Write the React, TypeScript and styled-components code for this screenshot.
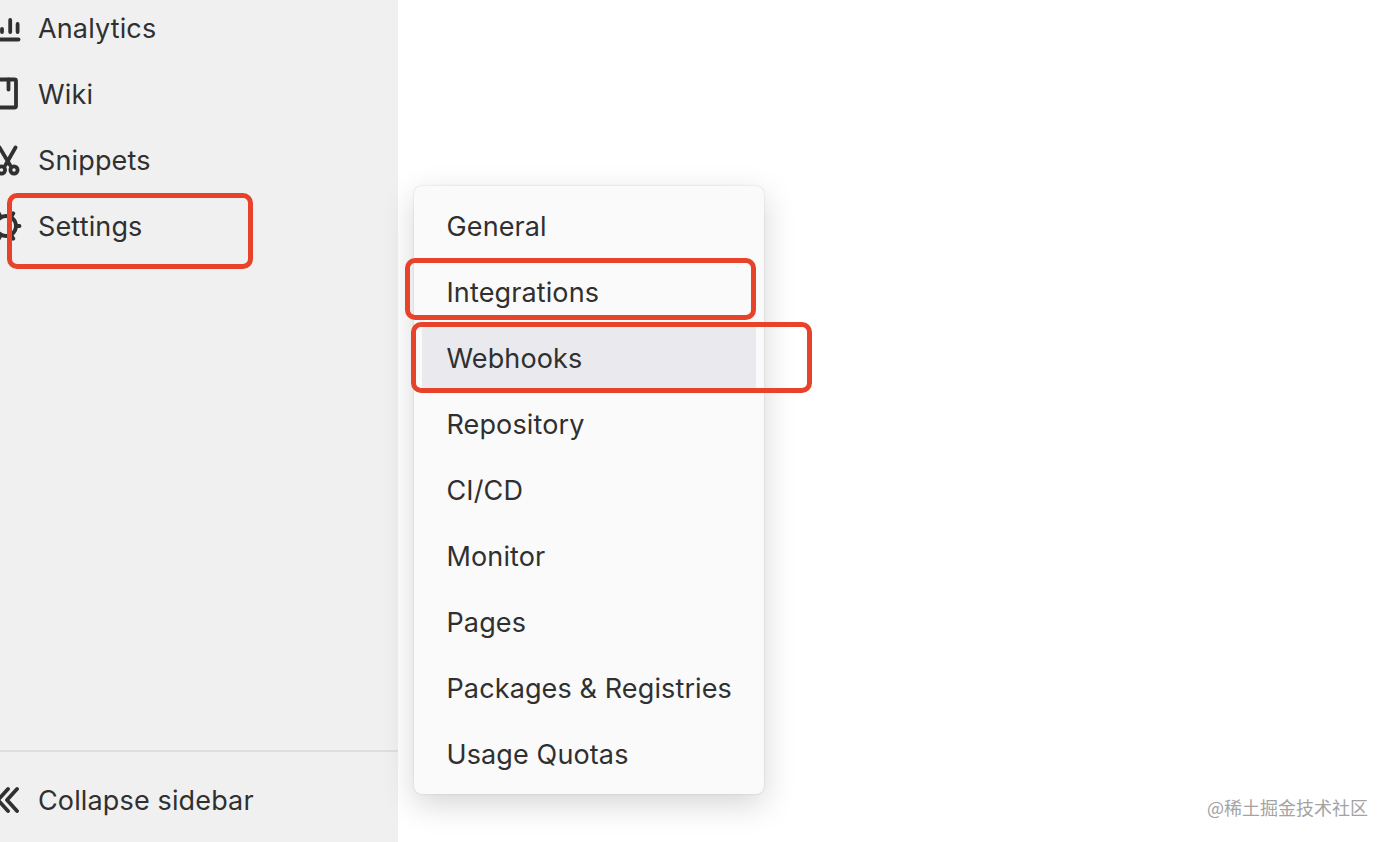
import React, {FC} from "react";
import styled, {createGlobalStyle} from "styled-components";

const sideItems = [
  {label: "Analytics", icon: <>
    <path d="M20 21v3M28.2 12v12M35.6 16v8"/>
    <path d="M17 31.5h19.5"/>
  </>},
  {label: "Wiki", icon: <>
    <path d="M14 5.5h18.5a1.5 1.5 0 0 1 1.5 1.5v25a1.5 1.5 0 0 1-1.5 1.5H14a4 4 0 0 1-4-4V9.500a4 4 0 0 1 4-4z"/>
    <path d="M26.500 5.500v10"/>
  </>},
  {label: "Snippets", icon: <>
    <path d="M33.500 7.500 23.500 25M17.500 7.500l10.500 17.500"/>
    <circle cx="32" cy="30" r="3.600"/>
    <circle cx="19.500" cy="30" r="3.600"/>
  </>},
  {label: "Settings", icon: <>
    <circle cx="24" cy="20" r="10"/>
    <path d="M34 20h3.500M29 11.300l2.300-4M19 11.300l-2.300-4M14 20h-3.500M19 28.700l-2.300 4M29 28.700l2.300 4"/>
  </>},
];

const menuItems = ["General", "Integrations", "Webhooks", "Repository", "CI/CD", "Monitor", "Pages", "Packages & Registries", "Usage Quotas"];

const App: FC = () => <Page>
  <GlobalStyle/>
  <Sidebar>
    <SideList>
      {sideItems.map(item => <SideRow key={item.label}>
        <SideIcon viewBox="0 0 40 40">{item.icon}</SideIcon>
        {item.label}
      </SideRow>)}
    </SideList>
    <SideFooter>
      <SideIcon viewBox="0 0 40 40">
        <path d="M35 9 25 20l10 11M26 9 16 20l10 11"/>
      </SideIcon>
      Collapse sidebar
    </SideFooter>
  </Sidebar>
  <Main>
    <Menu>
      {menuItems.map(label => <MenuItem key={label} $active={label === "Webhooks"}>{label}</MenuItem>)}
    </Menu>
  </Main>
  <Mark $x={7} $y={193} $w={246} $h={76}/>
  <Mark $x={405} $y={258} $w={351} $h={62}/>
  <Mark $x={411} $y={322} $w={401} $h={71}/>
  <Watermark>@稀土掘金技术社区</Watermark>
</Page>;
export default App;

const GlobalStyle = createGlobalStyle`
html, body {
  margin: 0;
  padding: 0;
  background: #fff;
}
`;

const Page = styled.div`
position: relative;
display: flex;
width: 1392px;
height: 842px;
overflow: hidden;
background: #fff;
color: #303030;
font-family: Inter, "Liberation Sans", sans-serif;
font-size: 27px;
`;

const Sidebar = styled.aside`
display: flex;
flex-direction: column;
justify-content: space-between;
width: 398px;
height: 100%;
background: #f0f0f0;
letter-spacing: 0.14px;
`;

const SideList = styled.div`
display: flex;
flex-direction: column;
margin-top: -5px;
`;

const SideRow = styled.div`
display: flex;
align-items: center;
gap: 16px;
height: 66px;
`;

const SideFooter = styled(SideRow)`
height: 92px;
padding-top: 6px;
box-sizing: border-box;
border-top: 2px solid #dedede;
`;

const SideIcon = styled.svg`
flex: none;
width: 40px;
height: 40px;
margin-left: -18px;
fill: none;
stroke: #303030;
stroke-width: 3.8;
stroke-linecap: round;
stroke-linejoin: round;
`;

const Main = styled.main`
flex: 1;
padding: 186px 0 0 16px;
`;

const Menu = styled.div`
display: flex;
flex-direction: column;
box-sizing: border-box;
width: 350px;
height: 608px;
padding: 7px 8px;
background: #fafafa;
border-radius: 8px;
box-shadow: 0 0 2px rgba(0, 0, 0, 0.16), 0 10px 32px rgba(0, 0, 0, 0.17);
letter-spacing: 0.12px;
`;

const MenuItem = styled.div<{$active?: boolean}>`
display: flex;
align-items: center;
flex: none;
height: 66px;
padding-left: 24.5px;
background: ${p => p.$active ? "#e9e9ee" : "transparent"};
`;

const Mark = styled.div<{$x: number; $y: number; $w: number; $h: number}>`
position: absolute;
left: ${p => p.$x}px;
top: ${p => p.$y}px;
width: ${p => p.$w}px;
height: ${p => p.$h}px;
box-sizing: border-box;
border: 5px solid #e8432a;
border-radius: 10px;
`;

const Watermark = styled.div`
position: absolute;
right: 24px;
top: 795px;
color: #a3a3a3;
font-family: "Noto Sans CJK SC", sans-serif;
font-size: 18px;
line-height: 24px;
`;
